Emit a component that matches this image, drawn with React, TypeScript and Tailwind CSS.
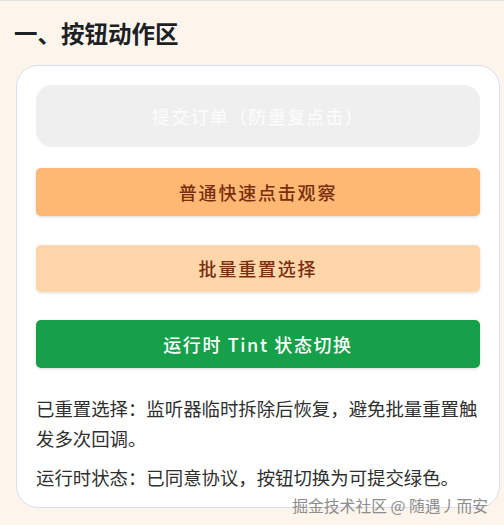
import React from "react";

const font = { fontFamily: '"Noto Sans CJK SC", "Noto Sans", sans-serif' };

export default function App() {
  return (
    <div
      className="relative min-h-[525px] w-[504px] bg-[#fdf5ec] border-t border-[#e2e2e2] pt-[18px]"
      style={font}
    >
      <h1 className="ml-[14px] text-[23.5px] leading-[28px] font-bold text-[#1c1f24]">
        一、按钮动作区
      </h1>
      <div className="ml-[16px] mr-[4px] mt-[18px] rounded-[22px] border border-[#d9ddf3] bg-white px-[19px] pt-[19px] pb-[15px]">
        <div className="flex h-[62px] items-center justify-center rounded-[16px] bg-[#efefef] text-[18px] tracking-[1.3px] font-medium text-[#fbfbfb]">
          提交订单（防重复点击）
        </div>
        <div className="mt-[21px] flex h-[48px] items-center justify-center rounded-[5px] bg-[#fdb874] text-[18px] tracking-[1.8px] font-medium text-[#7a2e0e] shadow-[0_1px_3px_rgba(0,0,0,0.15)]">
          普通快速点击观察
        </div>
        <div className="mt-[29px] flex h-[47px] items-center justify-center rounded-[5px] bg-[#fed6a9] text-[18px] tracking-[1.8px] font-medium text-[#7a2e0e] shadow-[0_1px_3px_rgba(0,0,0,0.12)]">
          批量重置选择
        </div>
        <div className="mt-[28px] flex h-[48px] items-center justify-center rounded-[5px] bg-[#17a04a] text-[18px] tracking-[1.6px] font-medium text-white shadow-[0_1px_3px_rgba(0,0,0,0.15)]">
          运行时 Tint 状态切换
        </div>
        <p className="mt-[25px] text-[18.4px] leading-[30px] text-[#2f2f2f]">
          已重置选择：监听器临时拆除后恢复，避免批量重置触发多次回调。
        </p>
        <p className="mt-[9px] text-[18.4px] leading-[30px] text-[#2f2f2f]">
          运行时状态：已同意协议，按钮切换为可提交绿色。
        </p>
      </div>
      <div className="absolute right-[16px] top-[494px] text-[15.8px] leading-[22px] text-[#8d8d8d]">
        掘金技术社区 @ 随遇丿而安
      </div>
    </div>
  );
}
